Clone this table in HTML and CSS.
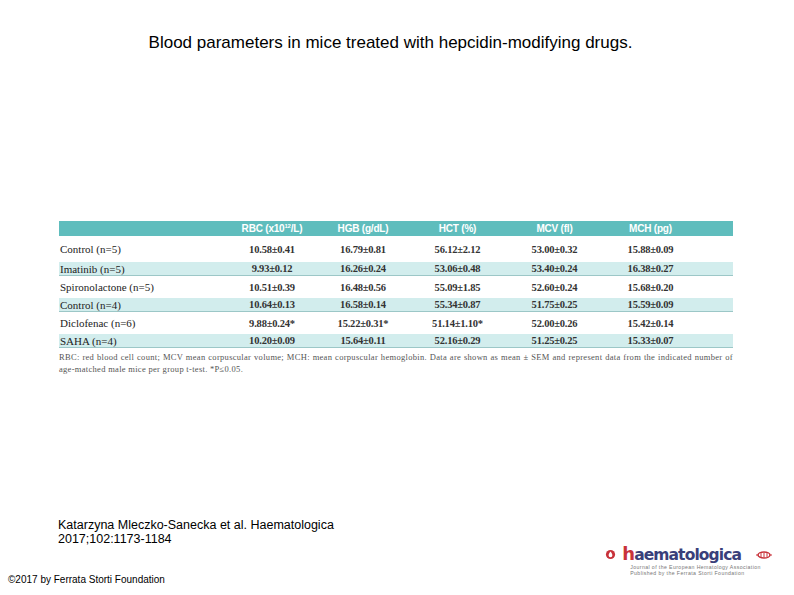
FILE: index.html
```html
<!DOCTYPE html>
<html>
<head>
<meta charset="utf-8">
<link rel="stylesheet" href="styles.css">
</head>
<body>
<div class="slide">
  <h1 class="title">Blood parameters in mice treated with hepcidin-modifying drugs.</h1>
  <div class="figure">
    <div class="table">
      <div class="row head">
        <div class="c first"></div>
        <div class="c">RBC (x10<sup>12</sup>/L)</div>
        <div class="c">HGB (g/dL)</div>
        <div class="c">HCT (%)</div>
        <div class="c">MCV (fl)</div>
        <div class="c">MCH (pg)</div>
        <div class="c"></div>
      </div>
      <div class="row plain top">
        <div class="c first">Control (n=5)</div>
        <div class="c num">10.58±0.41</div>
        <div class="c num">16.79±0.81</div>
        <div class="c num">56.12±2.12</div>
        <div class="c num">53.00±0.32</div>
        <div class="c num">15.88±0.09</div>
        <div class="c"></div>
      </div>
      <div class="row band">
        <div class="c first">Imatinib (n=5)</div>
        <div class="c num">9.93±0.12</div>
        <div class="c num">16.26±0.24</div>
        <div class="c num">53.06±0.48</div>
        <div class="c num">53.40±0.24</div>
        <div class="c num">16.38±0.27</div>
        <div class="c"></div>
      </div>
      <div class="row plain">
        <div class="c first">Spironolactone (n=5)</div>
        <div class="c num">10.51±0.39</div>
        <div class="c num">16.48±0.56</div>
        <div class="c num">55.09±1.85</div>
        <div class="c num">52.60±0.24</div>
        <div class="c num">15.68±0.20</div>
        <div class="c"></div>
      </div>
      <div class="row band">
        <div class="c first">Control (n=4)</div>
        <div class="c num">10.64±0.13</div>
        <div class="c num">16.58±0.14</div>
        <div class="c num">55.34±0.87</div>
        <div class="c num">51.75±0.25</div>
        <div class="c num">15.59±0.09</div>
        <div class="c"></div>
      </div>
      <div class="row plain">
        <div class="c first">Diclofenac (n=6)</div>
        <div class="c num">9.88±0.24*</div>
        <div class="c num">15.22±0.31*</div>
        <div class="c num">51.14±1.10*</div>
        <div class="c num">52.00±0.26</div>
        <div class="c num">15.42±0.14</div>
        <div class="c"></div>
      </div>
      <div class="row band">
        <div class="c first">SAHA (n=4)</div>
        <div class="c num">10.20±0.09</div>
        <div class="c num">15.64±0.11</div>
        <div class="c num">52.16±0.29</div>
        <div class="c num">51.25±0.25</div>
        <div class="c num">15.33±0.07</div>
        <div class="c"></div>
      </div>
    </div>
    <p class="caption">RBC: red blood cell count; MCV mean corpuscular volume; MCH: mean corpuscular hemoglobin. Data are shown as mean ± SEM and represent data from the indicated number of age-matched male mice per group t-test. *P≤0.05.</p>
  </div>
  <div class="citation">
    <p>Katarzyna Mleczko-Sanecka et al. Haematologica<br>2017;102:1173-1184</p>
  </div>
  <div class="footer">
    <p class="copy">©2017 by Ferrata Storti Foundation</p>
    <div class="logo">
      <div class="logo-main">
        <svg class="drop" width="11" height="11" viewBox="0 0 11 11"><circle cx="5.5" cy="5.5" r="4.6" fill="#c8323a"/><path d="M5.5 2.6 C4.4 4.2 3.6 5.2 3.6 6.3 a1.9 1.9 0 0 0 3.8 0 C7.4 5.2 6.6 4.2 5.5 2.6z" fill="#fff"/></svg>
        <span class="word"><span class="h">h</span>aematologica</span>
        <svg class="ehaf" width="16" height="8" viewBox="0 0 16 8"><ellipse cx="8" cy="4" rx="6" ry="3" fill="none" stroke="#c8323a" stroke-width="1.4"/><path d="M0 4h3M13 4h3M5 2v4M8 1.5v5M11 2v4" stroke="#c8323a" stroke-width="1"/></svg>
      </div>
      <div class="logo-sub">Journal of the European Hematology Association<br>Published by the Ferrata Storti Foundation</div>
    </div>
  </div>
</div>
</body>
</html>
```
FILE: styles.css
```css
* { box-sizing: border-box; }
html, body { margin: 0; padding: 0; background: #fff; }
body { font-family: "Liberation Sans", Arial, sans-serif; }
.slide {
  width: 794px;
  height: 595px;
  display: flex;
  flex-direction: column;
}
.title {
  margin: 34px 0 0 0;
  padding-right: 13px;
  font-size: 17px;
  font-weight: normal;
  text-align: center;
  color: #000;
  line-height: 17px;
}
.figure {
  margin: 170px 0 0 59px;
  width: 674px;
}
.table {
  font-family: "Liberation Serif", "Times New Roman", serif;
  font-size: 11px;
  color: #222;
}
.row {
  display: grid;
  grid-template-columns: 168px 90px 92px 97px 97px 95px 1fr;
  align-items: center;
}
.row .c { text-align: center; white-space: nowrap; }
.row .c.first { text-align: left; padding-left: 1px; }
.head {
  height: 15px;
  background: #5fbdbd;
  color: #fff;
  font-family: "Liberation Sans", Arial, sans-serif;
  font-weight: bold;
  font-size: 10px;
  letter-spacing: -0.2px;
}
.head sup { font-size: 6px; line-height: 0; vertical-align: 4px; }
.plain { height: 22px; }
.plain.top { height: 26px; }
.band {
  height: 14px;
  background: #d2eded;
  border-bottom: 1px solid #9cc7c7;
}
.num { font-size: 10.5px; font-weight: bold; color: #333; letter-spacing: -0.2px; }
.caption {
  margin: 3px 0 0 0;
  font-family: "Liberation Serif", "Times New Roman", serif;
  font-size: 8.5px;
  letter-spacing: 0.3px;
  line-height: 12px;
  color: #555;
  text-align: justify;
}
.citation {
  margin: 143px 0 0 58px;
}
.citation p {
  margin: 0;
  font-size: 12.5px;
  line-height: 14px;
  color: #000;
}
.footer {
  margin-top: 0;
  display: flex;
  justify-content: space-between;
  align-items: flex-end;
  padding: 0 22px 10px 8px;
}
.copy {
  margin: 0;
  font-size: 10px;
  color: #000;
  line-height: 12px;
}
.logo { display: flex; flex-direction: column; align-items: flex-start; padding-bottom: 10px; }
.logo-main { display: flex; align-items: center; gap: 6px; }
.drop { margin-left: 4px; }
.word {
  font-family: "DejaVu Sans", sans-serif;
  font-size: 15.5px;
  font-weight: bold;
  color: #3a3f7a;
  letter-spacing: -0.9px;
  line-height: 16px;
}
.word .h { color: #c8323a; font-size: 18px; }
.ehaf { margin-left: 9px; }
.logo-sub {
  margin: 2px 0 0 29px;
  font-size: 5.2px;
  line-height: 5.5px;
  color: #777;
  letter-spacing: 0.4px;
}
```
